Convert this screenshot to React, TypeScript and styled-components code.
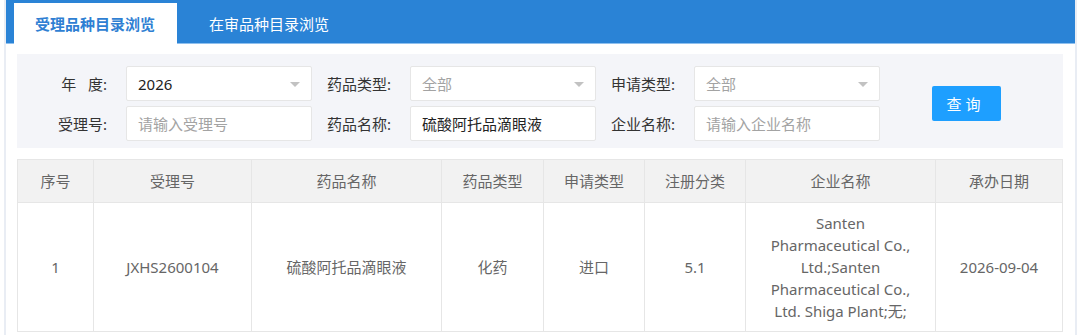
import styled, { createGlobalStyle } from 'styled-components'

const GlobalStyle = createGlobalStyle`
	html, body {
		margin: 0;
		padding: 0;
		background: #fff;
		font-family: "Noto Sans", "Noto Sans CJK SC", sans-serif;
		font-size: 14px;
		color: #333;
	}
	* { box-sizing: border-box; }
`;

const Frame = styled.div`
	margin: 0 3px 0 4px;
	border-left: 2px solid #e9edf4;
	border-right: 2px solid #e9edf4;
	min-height: 335px;
	background: #fff;
`;

const TabBar = styled.div`
	display: flex;
	align-items: flex-end;
	height: 44px;
	background: #2a83d6;
	border-bottom: 1px solid #8fc0ee;
	padding-left: 8px;
`;

const Tab = styled.div<{ $active?: boolean }>`
	height: 41px;
	display: flex;
	align-items: center;
	padding: ${(p) => (p.$active ? '0 22px 0 21px' : '0 22px 0 32px')};
	font-size: 15px;
	font-weight: ${(p) => (p.$active ? 700 : 400)};
	color: ${(p) => (p.$active ? '#2f7fd3' : '#fff')};
	background: ${(p) => (p.$active ? '#fff' : 'transparent')};
	margin-bottom: -1px;
`;

const Body = styled.div`
	padding: 10px 12px 0 11px;
`;

const FilterPanel = styled.div`
	display: flex;
	align-items: center;
	background: #f4f5f9;
	padding: 12px 0 7px 11px;
`;

const FilterGrid = styled.div`
	display: grid;
	grid-template-columns: 98px 186px 98px 186px 98px 186px;
	row-gap: 5px;
`;

const Label = styled.label`
	display: flex;
	align-items: center;
	justify-content: flex-end;
	padding-right: 19px;
	font-size: 15px;
	color: #333;
	white-space: pre;
`;

const Field = styled.div<{ $muted?: boolean }>`
	position: relative;
	height: 35px;
	background: #fff;
	border: 1px solid #e6e6e6;
	border-radius: 2px;
	display: flex;
	align-items: center;
	padding-left: 11px;
	font-size: 15px;
	color: ${(p) => (p.$muted ? '#a3a3a3' : '#222')};
`;

const Caret = styled.span`
	position: absolute;
	right: 11px;
	top: 15px;
	width: 0;
	height: 0;
	border-left: 5px solid transparent;
	border-right: 5px solid transparent;
	border-top: 5px solid #c2c2c2;
`;

const QueryButton = styled.button`
	margin-left: 52px;
	width: 69px;
	height: 35px;
	border: none;
	border-radius: 2px;
	background: #1e9fff;
	color: #fff;
	font-family: inherit;
	font-size: 15px;
	letter-spacing: 4px;
	padding-left: 4px;
`;

const Table = styled.table`
	margin-top: 11px;
	width: 1045px;
	border-collapse: collapse;
	table-layout: fixed;
	color: #666;
	font-size: 15px;
`;

const Th = styled.th`
	background: #f2f2f2;
	border: 1px solid #e6e6e6;
	font-weight: 400;
	line-height: 22px;
	padding: 10px 8px;
	text-align: center;
`;

const Td = styled.td`
	border: 1px solid #e6e6e6;
	line-height: 22px;
	padding: 9px 20px;
	text-align: center;
	word-break: normal;
`;

const columns = [
	{ title: '序号', width: 76 },
	{ title: '受理号', width: 158 },
	{ title: '药品名称', width: 190 },
	{ title: '药品类型', width: 102 },
	{ title: '申请类型', width: 101 },
	{ title: '注册分类', width: 101 },
	{ title: '企业名称', width: 190 },
	{ title: '承办日期', width: 127 },
];

const rows = [
	[
		'1',
		'JXHS2600104',
		'硫酸阿托品滴眼液',
		'化药',
		'进口',
		'5.1',
		'Santen Pharmaceutical Co., Ltd.;Santen Pharmaceutical Co., Ltd. Shiga Plant;无;',
		'2026-09-04',
	],
];

const App = () => {
	return (
		<>
			<GlobalStyle />
			<Frame>
				<TabBar>
					<Tab $active>受理品种目录浏览</Tab>
					<Tab>在审品种目录浏览</Tab>
				</TabBar>
				<Body>
					<FilterPanel>
						<FilterGrid>
							<Label>{'年   度:'}</Label>
							<Field>2026<Caret /></Field>
							<Label>药品类型:</Label>
							<Field $muted>全部<Caret /></Field>
							<Label>申请类型:</Label>
							<Field $muted>全部<Caret /></Field>
							<Label>受理号:</Label>
							<Field $muted>请输入受理号</Field>
							<Label>药品名称:</Label>
							<Field>硫酸阿托品滴眼液</Field>
							<Label>企业名称:</Label>
							<Field $muted>请输入企业名称</Field>
						</FilterGrid>
						<QueryButton>查询</QueryButton>
					</FilterPanel>
					<Table>
						<colgroup>
							{columns.map((c) => (
								<col key={c.title} style={{ width: c.width }} />
							))}
						</colgroup>
						<thead>
							<tr>
								{columns.map((c) => (
									<Th key={c.title}>{c.title}</Th>
								))}
							</tr>
						</thead>
						<tbody>
							{rows.map((row, i) => (
								<tr key={i}>
									{row.map((cell, j) => (
										<Td key={j}>{cell}</Td>
									))}
								</tr>
							))}
						</tbody>
					</Table>
				</Body>
			</Frame>
		</>
	)
}

export default App
